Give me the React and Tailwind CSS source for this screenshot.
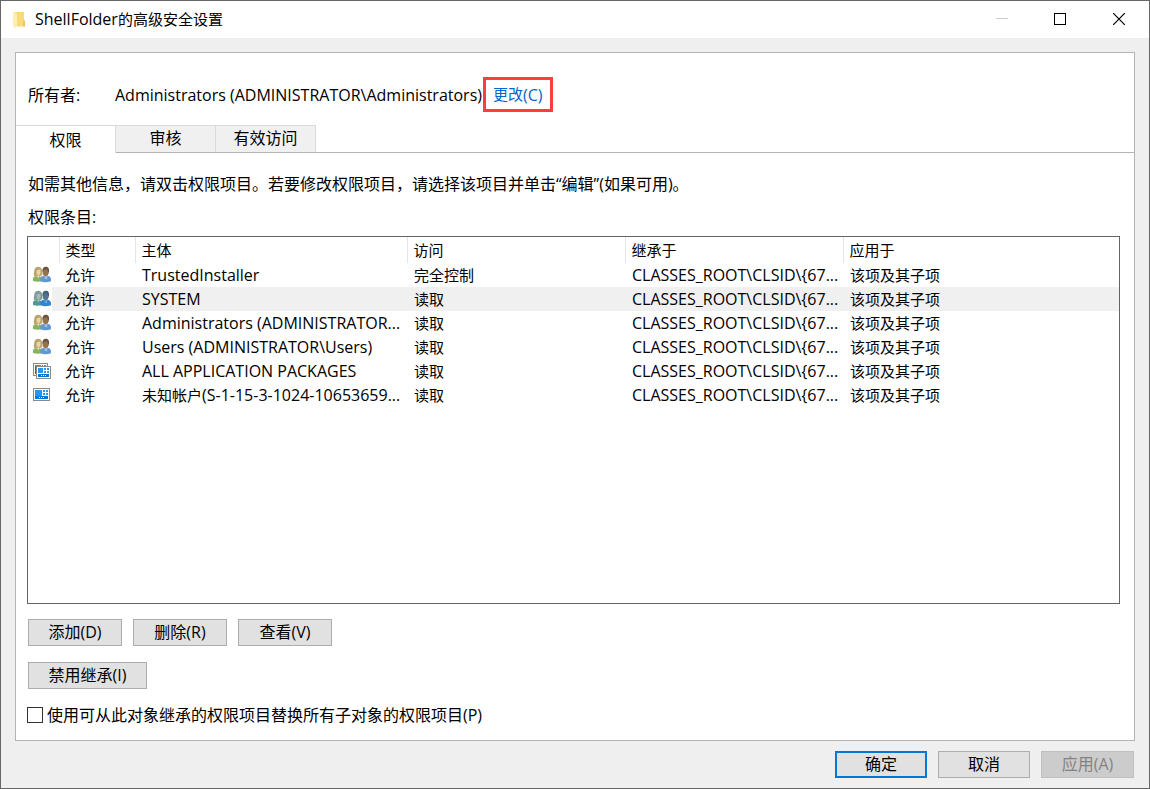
import React, { useState } from "react";

const entries = [
  { icon: "users", type: "允许", principal: "TrustedInstaller", access: "完全控制" },
  { icon: "users", type: "允许", principal: "SYSTEM", access: "读取" },
  { icon: "users", type: "允许", principal: "Administrators (ADMINISTRATOR...", access: "读取" },
  { icon: "users", type: "允许", principal: "Users (ADMINISTRATOR\\Users)", access: "读取" },
  { icon: "packages", type: "允许", principal: "ALL APPLICATION PACKAGES", access: "读取" },
  { icon: "package", type: "允许", account: "未知帐户", principal: "(S-1-15-3-1024-10653659...", access: "读取" },
];

const inheritedFrom = "CLASSES_ROOT\\CLSID\\{67...";
const appliesTo = "该项及其子项";

const tabs = ["权限", "审核", "有效访问"];

function FolderIcon() {
  return (
    <svg width="14" height="18" viewBox="0 0 14 18" aria-hidden="true">
      <path d="M3 1h8.500q.5 0 .5.500V9l1 .8V15.500H3z" fill="#f8da7c" />
      <path d="M11 9.500l2 .3V15.500h-2z" fill="#eec565" />
      <path d="M1 1h1l3 2v11.500L4 17.500l-3-2z" fill="#ffeeb5" />
    </svg>
  );
}

function UsersIcon({ selected }) {
  const c = selected
    ? { green: "#4d9a92", hair: "#7d9d96", face: "#a5b9b8", blue: "#3583cf", skin: "#56738c", dark: "#42617b", shirt: "#6aa9e0" }
    : { green: "#86b35c", hair: "#b9a46c", face: "#ecd0b0", blue: "#6497cf", skin: "#94704f", dark: "#6b5644", shirt: "#a9c6e6" };
  return (
    <svg width="18" height="18" viewBox="0 0 18 18" aria-hidden="true">
      <path d="M0 15v-2.500C0 10.800 1.500 10 4.500 10s4.500.8 4.500 2.800V15q-4.500 1.500-9 0z" fill={c.green} />
      <path d="M.8 9.500C.6 8 1.200 6 1.300 4.500 1.600 2 3 .8 5.200.8s3.600 1.200 3.800 3.700c.1 2 .6 3.200.2 4.700L6 10.500H3z" fill={c.hair} />
      <path d="M3.500 4.500C5 4.500 6 3.800 6.500 3.200 7.800 4.500 7.800 6 7.300 7.500c-.4 1.200-1.100 1.800-1.900 1.800C4.200 9.300 3.300 7.300 3.500 4.500z" fill={c.face} />
      <path d="M3.500 9.500h3.200l-1 3z" fill={c.face} />
      <path d="M7.300 15.300v-2.100c0-2.200 2-3.700 5.200-3.700s5.500 1.500 5.500 3.700v2q-5.300 1.900-10.700.1z" fill={c.blue} />
      <path d="M10.800 9.500l2 1.200 1.800-1.200-.8 3.800h-1.200z" fill={c.shirt} />
      <ellipse cx="12.700" cy="5.600" rx="3.100" ry="4.500" fill={c.skin} />
      <path d="M9.500 5.500C9.200 2.500 10.500.8 12.800.8s3.700 1.600 3.200 5.200l-.8 1c0-2.500-1-3.500-2.400-3.500S10.300 4 10 6z" fill={c.dark} />
    </svg>
  );
}

// one 17x13 tile board
function PackageIcon() {
  return (
    <svg width="18" height="18" viewBox="0 -2 18 18" shapeRendering="crispEdges" aria-hidden="true">
      <path d="M0 0h17v13H0z" fill="#8a8a8a" />
      <path d="M1 1h15v11H1z" fill="#fff" />
      <path d="M2 2h7v6H2z" fill="#2b95e9" />
      <path d="M10 2h2v2h-2zM13 2h2v2h-2zM10 5h2v2h-2zM13 5h2v2h-2z" fill="#2b95e9" />
      <path d="M2 8h13v3H2z" fill="#0078d7" />
      <path d="M6 9h1v1H6zM8 9h1v1H8zM10 9h1v1h-1z" fill="#fff" />
    </svg>
  );
}

// two boards stacked, the front one covers most of the back one
function PackagesIcon() {
  return (
    <svg width="18" height="18" viewBox="0 -1 18 18" shapeRendering="crispEdges" aria-hidden="true">
      <path d="M0 0h15v13H0z" fill="#8a8a8a" />
      <path d="M1 1h13v11H1z" fill="#fff" />
      <path d="M2 2h6v1H2zM9 2h1v1H9zM11 2h2v1h-2z" fill="#2b95e9" />
      <path d="M2 3h1v8H2z" fill="#0078d7" />
      <path d="M3 3h15v13H3z" fill="#8a8a8a" />
      <path d="M4 4h13v11H4z" fill="#fff" />
      <path d="M5 5h5v5H5z" fill="#2b95e9" />
      <path d="M11 5h2v2h-2zM14 5h2v2h-2zM11 8h2v2h-2zM14 8h2v2h-2z" fill="#2b95e9" />
      <path d="M5 11h11v3H5z" fill="#0078d7" />
      <path d="M8 12h1v1H8zM10 12h1v1h-1zM12 12h1v1h-1z" fill="#fff" />
    </svg>
  );
}

function EntryIcon({ kind, selected }) {
  if (kind === "users") return <UsersIcon selected={selected} />;
  if (kind === "packages") return <PackagesIcon />;
  return <PackageIcon />;
}

function Button({ children, className = "w-[94px]" }) {
  return (
    <button
      type="button"
      className={`h-[27px] border border-[#adadad] bg-[#e1e1e1] pb-0.5 leading-5 whitespace-nowrap hover:border-[#0078d7] hover:bg-[#e5f1fb] ${className}`}
    >
      {children}
    </button>
  );
}

export default function App() {
  const [tab, setTab] = useState(0);
  const [selected, setSelected] = useState(1);
  const [replace, setReplace] = useState(false);

  return (
    <div className="flex min-h-screen flex-col border border-[#666] bg-[#efefef] font-['Open_Sans','Noto_Sans_CJK_SC',sans-serif] text-base text-black">
      {/* Title bar */}
      <header className="flex h-[37px] items-center bg-white pl-[11px]">
        <FolderIcon />
        <h1 className="flex-1 pb-0.5 pl-[9px] text-[15px] leading-6">
          <span className="text-base">ShellFolder</span>的高级安全设置
        </h1>
        <button type="button" aria-label="最小化" disabled className="flex h-full w-[58px] items-center justify-center">
          <svg width="12" height="12" viewBox="0 0 12 12" shapeRendering="crispEdges">
            <path d="M0 4h12v1H0z" fill="#ccc" />
          </svg>
        </button>
        <button type="button" aria-label="最大化" className="flex h-full w-[58px] items-center justify-center pb-px">
          <svg width="12" height="12" viewBox="0 0 12 12" fill="none" stroke="#000">
            <rect x="0.5" y="0.5" width="11" height="11" />
          </svg>
        </button>
        <button type="button" aria-label="关闭" className="flex h-full w-[60px] items-center justify-center pb-px">
          <svg width="12" height="12" viewBox="0 0 12 12" stroke="#000" strokeWidth="1.2">
            <path d="M0 0l12 12M12 0L0 12" />
          </svg>
        </button>
      </header>

      <main className="mx-3.5 mt-3.5 flex flex-1 flex-col border border-[#b4b4b4] bg-white">
        {/* Owner */}
        <div className="flex items-center px-3 pt-6">
          <span className="w-[87px]">所有者:</span>
          <span>Administrators (ADMINISTRATOR\Administrators)</span>
          <a
            href="#change"
            className="ml-px flex h-[35px] items-center border-3 border-[#fa3e3e] px-[7px] text-[15px] text-[#0066cc]"
          >
            更改<span className="text-base">(C)</span>
          </a>
        </div>

        {/* Tabs */}
        <div role="tablist" className="mt-[13px] flex h-7 border-b border-[#b4b4b4]">
          {tabs.map((name, i) => (
            <button
              key={name}
              type="button"
              role="tab"
              aria-selected={tab === i}
              onClick={() => setTab(i)}
              className={`w-[100px] border-t border-r border-[#d9d9d9] leading-6 ${
                tab === i ? "-mb-px bg-white" : "bg-[#f0f0f0] pb-0.5"
              }`}
            >
              {name}
            </button>
          ))}
        </div>

        <section className="flex flex-1 flex-col px-3 pt-[19px] pb-[13px]">
          <p className="leading-6">
            如需其他信息，请双击权限项目。若要修改权限项目，请选择该项目并单击“编辑”(如果可用)。
          </p>
          <p className="mt-[9px] leading-6">权限条目:</p>

          <div className="mt-[7px] mr-0.5 -ml-px flex-1 border border-[#646464]">
            <table className="w-full table-fixed border-collapse text-left text-[15px] leading-6 whitespace-nowrap">
              <colgroup>
                <col className="w-[31px]" />
                <col className="w-[76px]" />
                <col className="w-[272px]" />
                <col className="w-[218px]" />
                <col className="w-[218px]" />
                <col />
              </colgroup>
              <thead>
                <tr className="h-[26px]">
                  <th className="border-r border-[#e5e5e5]" aria-label="图标" />
                  <th className="border-r border-[#e5e5e5] p-0 pl-1.5 font-normal">类型</th>
                  <th className="border-r border-[#e5e5e5] p-0 pl-1.5 font-normal">主体</th>
                  <th className="border-r border-[#e5e5e5] p-0 pl-1.5 font-normal">访问</th>
                  <th className="border-r border-[#e5e5e5] p-0 pl-1.5 font-normal">继承于</th>
                  <th className="p-0 pl-1.5 font-normal">应用于</th>
                </tr>
              </thead>
              <tbody>
                {entries.map((e, i) => {
                  const bg = selected === i ? "bg-[#f0f0f0]" : "";
                  return (
                    <tr key={e.principal} className="h-6" onClick={() => setSelected(i)}>
                      <td className="p-0">
                        <div className="flex h-6">
                          <span className="flex w-6 items-start justify-end pt-[3px] pr-px">
                            <EntryIcon kind={e.icon} selected={selected === i} />
                          </span>
                          <span className={`flex-1 ${bg}`} />
                        </div>
                      </td>
                      <td className={`p-0 pl-1.5 ${bg}`}>{e.type}</td>
                      <td className={`p-0 pl-[7px] ${bg}`}>
                        {e.account}
                        <span className="text-base leading-5">{e.principal}</span>
                      </td>
                      <td className={`p-0 pl-[7px] ${bg}`}>{e.access}</td>
                      <td className={`p-0 pl-[7px] text-base ${bg}`}>{inheritedFrom}</td>
                      <td className={`p-0 pl-[7px] ${bg}`}>{appliesTo}</td>
                    </tr>
                  );
                })}
              </tbody>
            </table>
          </div>

          <div className="mt-[15px] flex gap-[11px]">
            <Button>添加(D)</Button>
            <Button>删除(R)</Button>
            <Button>查看(V)</Button>
          </div>
          <div className="mt-4 flex">
            <Button className="w-[119px]">禁用继承(I)</Button>
          </div>
          <label className="mt-3.5 -ml-px flex items-center gap-1 leading-6">
            <input
              type="checkbox"
              checked={replace}
              onChange={(e) => setReplace(e.target.checked)}
              className="size-4 appearance-none border border-[#333] bg-white checked:bg-[#0078d7]"
            />
            <span>使用可从此对象继承的权限项目替换所有子对象的权限项目(P)</span>
          </label>
        </section>
      </main>

      {/* Dialog buttons */}
      <footer className="flex justify-end gap-[11px] py-2.5 pr-[15px]">
        <button type="button" className="h-[27px] w-[92px] border-2 border-[#0078d7] bg-[#e1e1e1] pb-0.5 leading-5">
          确定
        </button>
        <Button className="w-[92px]">取消</Button>
        <button
          type="button"
          disabled
          className="h-[27px] w-[93px] border border-[#bfbfbf] bg-[#cccccc] pb-0.5 leading-5 text-[#838383]"
        >
          应用(A)
        </button>
      </footer>
    </div>
  );
}
